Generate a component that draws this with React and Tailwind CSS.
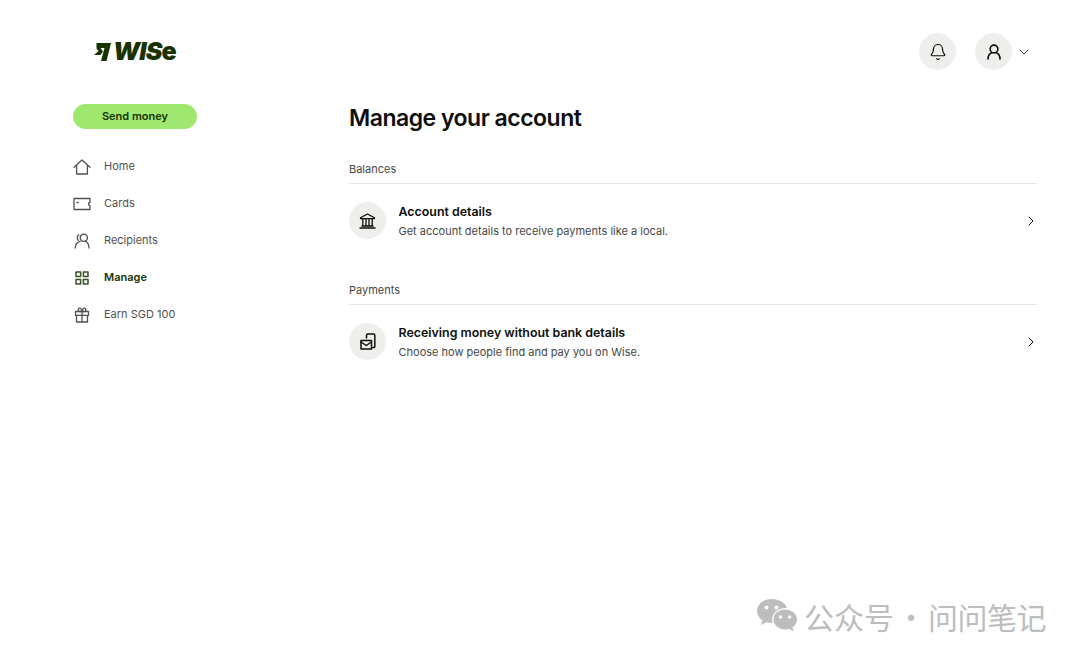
import { ChevronDown, ChevronRight, Bell } from 'lucide-react';

const iconProps = {
  fill: 'none',
  stroke: 'currentColor',
  strokeLinecap: 'round',
  strokeLinejoin: 'round',
};

function HomeIcon() {
  return (
    <svg width="18" height="16" viewBox="0 0 18 16" strokeWidth="1.3" {...iconProps}>
      <path d="M1 8.2 9 1l8 7.2M3.6 7v8h10.8V7" />
    </svg>
  );
}

function CardIcon() {
  return (
    <svg width="18" height="14" viewBox="0 0 18 14" strokeWidth="1.3" {...iconProps}>
      <path d="M17 1.500H1v11h16V8.500a1.500 1.500 0 0 1 0-3z" />
      <path d="M4 5.500h1.200" />
    </svg>
  );
}

function RecipientsIcon() {
  return (
    <svg width="16" height="16" viewBox="0 0 16 16" strokeWidth="1.3" {...iconProps}>
      <circle cx="9.800" cy="4.800" r="3.600" />
      <path d="M1.200 15c0-3.400 1.900-5.800 5-6.700M11.200 8.200c2.200.8 3.600 3.400 3.800 6.800M4.800 1.800C3 3 2.700 5.600 4.200 7.400" />
    </svg>
  );
}

function ManageIcon() {
  return (
    <svg width="14" height="14" viewBox="0 0 14 14" strokeWidth="1.500" {...iconProps} className="opacity-85">
      <rect x="1" y="1" width="4.600" height="4.600" />
      <rect x="8.400" y="1" width="4.600" height="4.600" />
      <rect x="1" y="8.400" width="4.600" height="4.600" />
      <rect x="8.400" y="8.400" width="4.600" height="4.600" />
    </svg>
  );
}

function GiftIcon() {
  return (
    <svg width="16" height="16" viewBox="0 0 16 16" strokeWidth="1.300" {...iconProps}>
      <path d="M1.500 4.500h13v3.800h-13zM2.500 8.300V15h11V8.300M8 4.500V15" />
      <path d="M8 4.500H5.200C4 4.500 3.800 1.200 5.600 1.200 7 1.200 8 3 8 4.500c0-1.500 1-3.300 2.400-3.300 1.800 0 1.600 3.300.4 3.300z" />
    </svg>
  );
}

function UserIcon() {
  return (
    <svg width="14" height="16" viewBox="0 0 14 16" strokeWidth="1.600" {...iconProps}>
      <circle cx="7" cy="5" r="3.900" />
      <path d="M1 15c0-3.600 1.800-5.600 3.800-6.300M13 15c0-3.600-1.800-5.600-3.800-6.300" />
    </svg>
  );
}

function BankIcon() {
  return (
    <svg width="17" height="16" viewBox="0 0 17 16" strokeWidth="1.300" {...iconProps} strokeLinecap="butt">
      <path d="M1.500 4.800 8.500 1l7 3.800v.8h-14zM3.800 5.600v7.200M7 5.600v7.200M10 5.600v7.200M13.200 5.600v7.200M2.500 13h12M.5 15h16" />
    </svg>
  );
}

function ReceiveIcon() {
  return (
    <svg width="16" height="17" viewBox="0 0 16 17" strokeWidth="1.500" {...iconProps}>
      <path d="M6.500 5V2.200c0-.7.500-1.200 1.200-1.200h5.900c.7 0 1.200.5 1.200 1.200v11.200c0 .7-.5 1.200-1.200 1.200h-.9" />
      <path d="M1 7.500h10.500V16H1z" />
      <path d="m1 9 5.250 3.500L11.500 9" />
    </svg>
  );
}

function WeChatIcon() {
  return (
    <svg width="42" height="36" viewBox="0 0 42 36">
      <path fill="#bdbdbd" d="M15.500 1C7.500 1 1 6.300 1 13c0 3.800 2.100 7.100 5.400 9.300L5 27l5.200-2.700c1.700.5 3.400.8 5.300.8h1.200c-.4-1.200-.6-2.400-.6-3.600 0-6.400 6-11.400 13.600-11.400h1C29.800 4.800 23.300 1 15.500 1Z" />
      <path fill="#bdbdbd" d="M41 21.500C41 15.800 35.500 11.500 29 11.500S17.500 15.800 17.500 21.500 23 31.500 29 31.500c1.500 0 3-.2 4.300-.7l4.200 2.700-1.100-4.200C39.200 27.500 41 24.700 41 21.500Z" />
      <circle cx="10.500" cy="9.500" r="2" fill="#fff" />
      <circle cx="20.500" cy="9.500" r="2" fill="#fff" />
      <circle cx="24.500" cy="19" r="1.700" fill="#fff" />
      <circle cx="33.500" cy="19" r="1.700" fill="#fff" />
    </svg>
  );
}

const navItems = [
  { label: 'Home', icon: <HomeIcon /> },
  { label: 'Cards', icon: <CardIcon /> },
  { label: 'Recipients', icon: <RecipientsIcon /> },
  { label: 'Manage', icon: <ManageIcon />, active: true },
  { label: 'Earn SGD 100', icon: <GiftIcon /> },
];

const sections = [
  {
    title: 'Balances',
    name: 'Account details',
    text: 'Get account details to receive payments like a local.',
    icon: <BankIcon />,
  },
  {
    title: 'Payments',
    name: 'Receiving money without bank details',
    text: 'Choose how people find and pay you on Wise.',
    icon: <ReceiveIcon />,
  },
];

export default function App() {
  return (
    <div className="relative w-[1080px] h-[660px] overflow-hidden bg-white font-['Inter',sans-serif] text-[#0e0f0c]">
      <header className="flex items-center justify-between h-[70px] pt-[33px] pl-[94px] pr-[48px]">
        <div className="flex items-center h-[37px] text-[#163300]">
          <svg width="17" height="18" viewBox="0 0 17 18">
            <path fill="#163300" d="M2.500 0H17l-4.500 18H7l3.500-13H6.500L9 8.500 6.500 12H0l4.500-4-2-2.500z" />
          </svg>
          <span className="ml-[2px] text-[25px] leading-none font-black italic tracking-[-0.8px]">
            WIS<span className="not-italic">e</span>
          </span>
        </div>
        <div className="flex items-center">
          <div className="flex items-center justify-center w-[37px] h-[37px] rounded-full bg-[#eeefed]">
            <Bell size={18} strokeWidth={1.600} />
          </div>
          <div className="flex items-center justify-center w-[37px] h-[37px] ml-[19px] rounded-full bg-[#eeefed]">
            <UserIcon />
          </div>
          <ChevronDown size={16} strokeWidth={1.400} className="ml-[4px] text-[#163300]" />
        </div>
      </header>

      <div className="flex">
        <aside className="w-[349px] pl-[73px] pt-[34px]">
          <button className="block w-[124px] h-[25px] rounded-full bg-[#9fe870] text-[11px] font-semibold text-[#163300]">
            Send money
          </button>
          <nav className="flex flex-col mt-[19px]">
            {navItems.map((item) => (
              <div
                key={item.label}
                className={`flex items-center h-[37px] text-[11px] ${
                  item.active ? 'font-semibold text-[#163300]' : 'text-[#4f514e]'
                }`}
              >
                <span className="flex items-center justify-center w-[18px] mr-[13px]">{item.icon}</span>
                {item.label}
              </div>
            ))}
          </nav>
        </aside>

        <main className="w-[688px] pt-[33px]">
          <h1 className="text-[23px] leading-[30px] font-semibold tracking-[-0.5px] text-[#0e0f0c]">
            Manage your account
          </h1>
          <div className="flex flex-col gap-[26px] mt-[29px]">
            {sections.map((section) => (
              <section key={section.title}>
                <h2 className="pb-[7px] text-[11px] leading-[14px] text-[#454745] border-b border-[#e6e7e5]">
                  {section.title}
                </h2>
                <div className="flex items-center h-[73px]">
                  <div className="flex items-center justify-center w-[37px] h-[37px] rounded-full bg-[#eeefed]">
                    {section.icon}
                  </div>
                  <div className="flex-1 ml-[12.500px]">
                    <p className="pt-[1px] text-[12.400px] leading-[18px] font-semibold">{section.name}</p>
                    <p className="mt-[2px] text-[11px] leading-[16px] text-[#454745]">{section.text}</p>
                  </div>
                  <ChevronRight size={16} strokeWidth={1.500} className="mr-[-2px]" />
                </div>
              </section>
            ))}
          </div>
        </main>
      </div>

      <div className="absolute left-[756px] top-[598px] flex items-center text-[#bdbdbd] font-['Noto_Sans_CJK_SC',sans-serif] text-[30px] leading-[36px]">
        <WeChatIcon />
        <span className="ml-[6px]">公众号</span>
        <span className="ml-[2px] mr-[2px]">·</span>
        <span className="tracking-[-0.500px]">问问笔记</span>
      </div>
    </div>
  );
}
